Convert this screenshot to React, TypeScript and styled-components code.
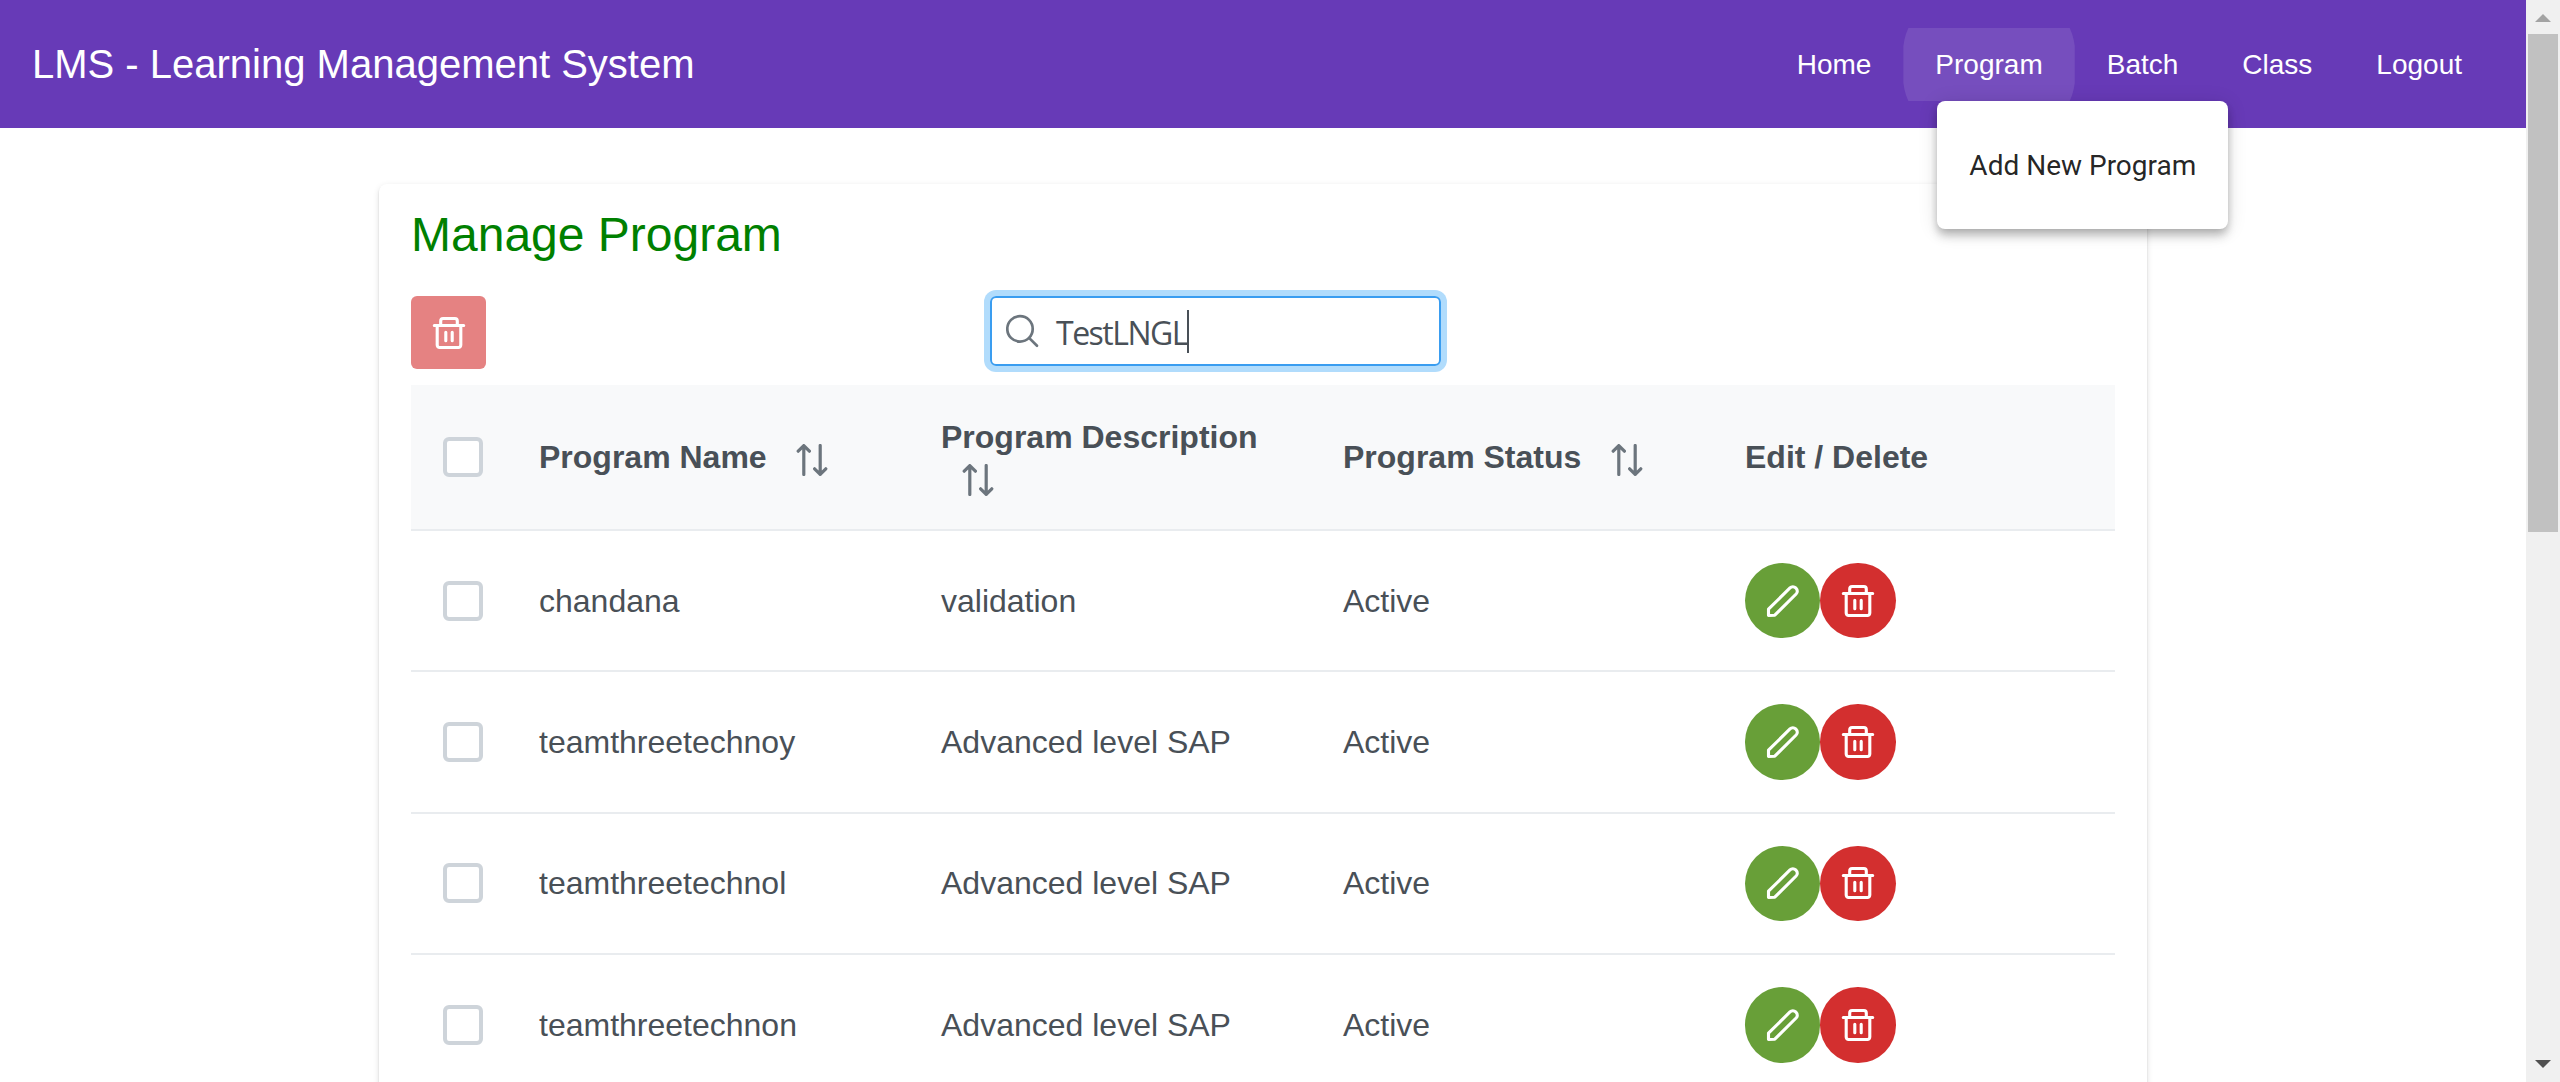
import React from "react";
import styled, { createGlobalStyle, css } from "styled-components";

const Global = createGlobalStyle`
  * { box-sizing: border-box; }
  html, body { margin: 0; padding: 0; height: 1082px; overflow: hidden; background: #fff; }
  body { font-family: "Liberation Sans", Arial, Helvetica, sans-serif; color: #495057; }
`;

const Window = styled.div`
  display: flex;
  width: 2560px;
  height: 1082px;
  overflow: hidden;
`;

const Page = styled.div`
  display: flex;
  flex-direction: column;
  width: 2526px;
  height: 1082px;
  overflow: hidden;
`;

const TopBar = styled.header`
  display: flex;
  align-items: center;
  justify-content: space-between;
  flex: none;
  height: 128px;
  padding: 0 32px;
  background: #673ab7;
  color: #fff;
`;

const Brand = styled.span`
  font-size: 40px;
  line-height: 64px;
  white-space: nowrap;
`;

const Nav = styled.nav`
  display: flex;
  align-items: center;
  padding-top: 1px;
`;

const NavItem = styled.div`
  position: relative;
`;

const activeShape = css`
  background: rgba(255, 255, 255, 0.1);
  clip-path: polygon(
    5px 0, calc(100% - 5px) 0, calc(100% - 2.6px) 6px, calc(100% - 1px) 12px, 100% 18px,
    100% 55px, calc(100% - 1px) 61px, calc(100% - 2.6px) 67px, calc(100% - 5px) 100%,
    5px 100%, 2.6px 67px, 1px 61px, 0 55px, 0 18px, 1px 12px, 2.6px 6px
  );
`;

const NavButton = styled.button<{ $active?: boolean }>`
  display: block;
  height: 73px;
  padding: 0 32px;
  border: 0;
  background: transparent;
  color: #fff;
  font-family: inherit;
  font-size: 28px;
  line-height: 73px;
  ${(p) => p.$active && activeShape}
`;

const Menu = styled.div`
  position: absolute;
  z-index: 2;
  top: 73px;
  left: 34px;
  display: flex;
  align-items: center;
  width: 291px;
  height: 128px;
  padding: 0 32px;
  border-radius: 8px;
  background: #fff;
  box-shadow: 0 4px 8px -2px rgba(0, 0, 0, 0.2), 0 8px 10px 0 rgba(0, 0, 0, 0.14),
    0 2px 20px 0 rgba(0, 0, 0, 0.12);
`;

const MenuItem = styled.a`
  color: rgba(0, 0, 0, 0.87);
  font-family: Roboto, sans-serif;
  font-size: 28px;
  white-space: nowrap;
`;

const Card = styled.main`
  flex: none;
  width: 1768px;
  margin: 56px 0 0 379px;
  padding: 32px;
  height: 1000px;
  border-radius: 8px;
  background: #fff;
  box-shadow: 0 4px 2px -2px rgba(0, 0, 0, 0.2), 0 2px 2px 0 rgba(0, 0, 0, 0.14),
    0 2px 6px 0 rgba(0, 0, 0, 0.12);
`;

const Title = styled.h1`
  margin: -13px 0 29px;
  color: green;
  font-size: 48px;
  font-weight: 400;
  line-height: 64px;
`;

const Toolbar = styled.div`
  display: grid;
  grid-template-columns: 579px 451px;
  align-items: start;
  height: 89px;
`;

const iconButton = css`
  display: flex;
  align-items: center;
  justify-content: center;
  padding: 0;
  border: 0;
  color: #fff;
`;

const BulkDelete = styled.button`
  ${iconButton}
  width: 75px;
  height: 73px;
  padding-top: 1px;
  border-radius: 6px;
  background: #e58282;
`;

const SearchBox = styled.div`
  display: flex;
  align-items: center;
  height: 70px;
  padding-left: 14px;
  border: 2px solid #3a9df0;
  border-radius: 6px;
  box-shadow: 0 0 0 6px #b1dcfc;
  color: #6c757d;
`;

const SearchText = styled.span`
  margin-left: 16px;
  padding-top: 3px;
  color: #495057;
  font-family: "Open Sans", "Noto Sans", sans-serif;
  font-size: 32px;
  line-height: 43px;
  letter-spacing: -1.5px;
`;

const Caret = styled.span`
  width: 2px;
  height: 43px;
  background: #495057;
`;

const Table = styled.div`
  display: flex;
  flex-direction: column;
  font-size: 32px;
  line-height: 40px;
`;

const Row = styled.div<{ $head?: boolean }>`
  display: grid;
  grid-template-columns: 96px repeat(4, 402px);
  align-items: center;
  height: ${(p) => (p.$head ? 146 : 141.4)}px;
  border-bottom: 2px solid #e9ecef;
  background: ${(p) => (p.$head ? "#f8f9fa" : "#fff")};
  font-weight: ${(p) => (p.$head ? 700 : 400)};
`;

const Cell = styled.div`
  padding: 0 32px;
`;

const Actions = styled(Cell)`
  display: flex;
`;

const Checkbox = styled.div`
  width: 40px;
  height: 40px;
  border: 4px solid #ced4da;
  border-radius: 6px;
  background: #fff;
`;

const SortIcon = styled.svg`
  width: 32px;
  height: 32px;
  margin-left: 20.5px;
  vertical-align: -8px;
  color: #6c757d;
`;

const RoundButton = styled.button<{ $color: string }>`
  ${iconButton}
  width: 75.4px;
  height: 75.4px;
  border-radius: 50%;
  background: ${(p) => p.$color};
`;

const Scrollbar = styled.div`
  display: flex;
  flex-direction: column;
  align-items: center;
  width: 34px;
  height: 1082px;
  background: #f0f0f0;
`;

const ScrollArrow = styled.svg`
  display: block;
  flex: none;
  width: 34px;
  height: 34px;
`;

const ScrollTrack = styled.div`
  flex: 1;
`;

const ScrollThumb = styled.div`
  width: 30px;
  height: 498px;
  background: #c1c1c1;
`;

const TrashIcon = () => (
  <svg width="34" height="34" viewBox="0 0 34 34" fill="none" stroke="currentColor" strokeWidth="3.1" strokeLinecap="round" strokeLinejoin="round">
    <path d="M2.3 9.5h29.4M5.2 9.5v19.6a2.4 2.4 0 0 0 2.4 2.4h18.8a2.4 2.4 0 0 0 2.4-2.4V9.5M8.7 9.5V4.9a2.4 2.4 0 0 1 2.4-2.4h11.8a2.4 2.4 0 0 1 2.4 2.4v4.6M13.8 16.2v8.6M20.2 16.2v8.6" />
  </svg>
);

const PencilIcon = () => (
  <svg width="34" height="34" viewBox="0 0 34 34" fill="none" stroke="currentColor" strokeWidth="3.1" strokeLinejoin="round">
    <path d="M2.5 31.5v-6.3L24 3.9a4 4 0 0 1 5.7 0l.4.4a4 4 0 0 1 0 5.7L8.8 31.2z" />
  </svg>
);

const SearchIcon = () => (
  <svg width="34" height="34" viewBox="0 0 34 34" fill="none" stroke="currentColor" strokeWidth="2.7" strokeLinecap="round">
    <circle cx="14" cy="14.9" r="12.7" />
    <path d="M23.3 24.1l7.7 7.6" />
  </svg>
);

const Sort = () => (
  <SortIcon viewBox="0 0 32 32" fill="none" stroke="currentColor" strokeWidth="3.2" strokeLinecap="round" strokeLinejoin="round">
    <path d="M7.8 30.5V1.6M2.2 7.2l5.6-5.6 5.6 5.6M24.2 1.5v28.9M18.6 24.8l5.6 5.6 5.6-5.6" />
  </SortIcon>
);

const navigation = ["Home", "Program", "Batch", "Class", "Logout"];

const columns = [
  { label: "Program Name", sortable: true },
  { label: "Program Description", sortable: true },
  { label: "Program Status", sortable: true },
  { label: "Edit / Delete", sortable: false },
];

const programs = [
  { name: "chandana", description: "validation", status: "Active" },
  { name: "teamthreetechnoy", description: "Advanced level SAP", status: "Active" },
  { name: "teamthreetechnol", description: "Advanced level SAP", status: "Active" },
  { name: "teamthreetechnon", description: "Advanced level SAP", status: "Active" },
];

export default function App() {
  return (
    <Window>
      <Global />
      <Page>
        <TopBar>
          <Brand>LMS - Learning Management System</Brand>
          <Nav>
            {navigation.map((item) => (
              <NavItem key={item}>
                <NavButton $active={item === "Program"}>{item}</NavButton>
                {item === "Program" && (
                  <Menu>
                    <MenuItem>Add New Program</MenuItem>
                  </Menu>
                )}
              </NavItem>
            ))}
          </Nav>
        </TopBar>
        <Card>
          <Title>Manage Program</Title>
          <Toolbar>
            <BulkDelete aria-label="Delete selected">
              <TrashIcon />
            </BulkDelete>
            <SearchBox>
              <SearchIcon />
              <SearchText>TestLNGL</SearchText>
              <Caret />
            </SearchBox>
          </Toolbar>
          <Table>
            <Row $head>
              <Cell>
                <Checkbox />
              </Cell>
              {columns.map((column) => (
                <Cell key={column.label}>
                  {column.label} {column.sortable && <Sort />}
                </Cell>
              ))}
            </Row>
            {programs.map((program) => (
              <Row key={program.name}>
                <Cell>
                  <Checkbox />
                </Cell>
                <Cell>{program.name}</Cell>
                <Cell>{program.description}</Cell>
                <Cell>{program.status}</Cell>
                <Actions>
                  <RoundButton $color="#689f38" aria-label="Edit">
                    <PencilIcon />
                  </RoundButton>
                  <RoundButton $color="#d32f2f" aria-label="Delete">
                    <TrashIcon />
                  </RoundButton>
                </Actions>
              </Row>
            ))}
          </Table>
        </Card>
      </Page>
      <Scrollbar>
        <ScrollArrow viewBox="0 0 34 34">
          <path d="M17 14l8 8H9z" fill="#a3a3a3" />
        </ScrollArrow>
        <ScrollThumb />
        <ScrollTrack />
        <ScrollArrow viewBox="0 0 34 34">
          <path d="M17 20l-8-8h16z" fill="#505050" />
        </ScrollArrow>
      </Scrollbar>
    </Window>
  );
}
